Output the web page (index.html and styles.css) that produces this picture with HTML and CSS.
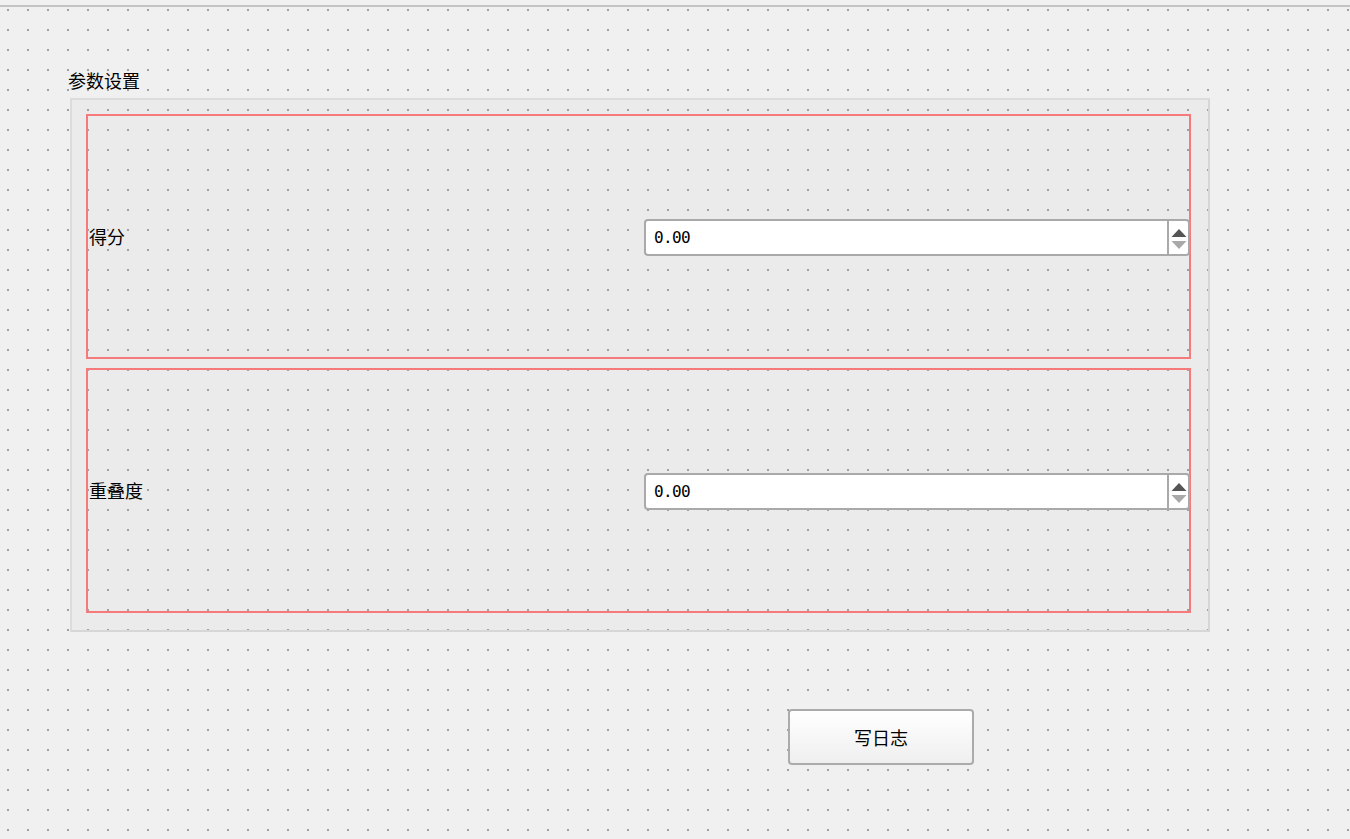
FILE: index.html
```html
<!DOCTYPE html>
<html lang="zh">
<head>
<meta charset="utf-8">
<title>参数设置</title>
<link rel="stylesheet" href="styles.css">
</head>
<body>
<div class="topline"></div>
<main class="form">
  <div class="group-title">参数设置</div>
  <section class="groupbox">
    <div class="row">
      <label class="label">得分</label>
      <div class="spinbox">
        <span class="value">0.00</span>
        <div class="arrows">
          <svg width="16" height="22" viewBox="0 0 16 22"><polygon points="8,2 15.5,10 0.5,10" fill="#555"/><polygon points="0.5,14 15.5,14 8,22" fill="#a9a9a9"/></svg>
        </div>
      </div>
    </div>
    <div class="row">
      <label class="label">重叠度</label>
      <div class="spinbox">
        <span class="value">0.00</span>
        <div class="arrows">
          <svg width="16" height="22" viewBox="0 0 16 22"><polygon points="8,2 15.5,10 0.5,10" fill="#555"/><polygon points="0.5,14 15.5,14 8,22" fill="#a9a9a9"/></svg>
        </div>
      </div>
    </div>
  </section>
  <div class="actions">
    <button class="btn">写日志</button>
  </div>
</main>
</body>
</html>
```
FILE: styles.css
```css
html, body {
  margin: 0;
  padding: 0;
}
body {
  width: 1350px;
  height: 839px;
  overflow: hidden;
  background-color: #f0f0f0;
  background-image: url("data:image/svg+xml,%3Csvg xmlns='http://www.w3.org/2000/svg' width='20' height='20'%3E%3Crect width='2' height='2' fill='%23a0a0a0'/%3E%3C/svg%3E");
  background-position: 7px 9px;
  background-repeat: repeat;
  font-family: "Noto Sans CJK SC", "Liberation Sans", sans-serif;
  font-size: 18px;
  color: #000;
}
.topline {
  height: 5px;
  border-bottom: 2px solid #c4c4c4;
  background: #f0f0f0;
}
.form {
  display: flex;
  flex-direction: column;
  padding-top: 63px;
}
.group-title {
  margin-left: 68px;
  line-height: 20px;
  height: 20px;
  margin-bottom: 8px;
}
.groupbox {
  margin-left: 70px;
  width: 1105px;
  border: 2px solid #dcdcdc;
  border-right-color: #d6d6d6;
  border-bottom-color: #d6d6d6;
  background-color: #ebebeb;
  background-image: url("data:image/svg+xml,%3Csvg xmlns='http://www.w3.org/2000/svg' width='20' height='20'%3E%3Crect width='2' height='2' fill='%23a0a0a0'/%3E%3C/svg%3E");
  background-position: 7px 9px;
  background-repeat: repeat;
  background-attachment: fixed;
  padding: 14px 17px 17px 14px;
  display: flex;
  flex-direction: column;
  gap: 9px;
}
.row {
  height: 239px;
  border: 2px solid #f67a7a;
  display: flex;
  align-items: center;
  justify-content: space-between;
  padding-left: 1px;
  padding-top: 2px;
}
.label {
  line-height: 20px;
  margin-bottom: 3px;
}
.spinbox {
  width: 542px;
  height: 33px;
  border: 2px solid #a9a9a9;
  border-radius: 4px;
  background: #fff;
  display: flex;
  align-items: center;
  justify-content: space-between;
  margin-right: -1px;
}
.value {
  font-family: "DejaVu Sans Mono", "Liberation Mono", monospace;
  font-size: 16px;
  letter-spacing: -0.6px;
  padding-left: 8px;
  color: #000;
}
.arrows {
  width: 18px;
  height: 33px;
  border-left: 2px solid #a9a9a9;
  display: flex;
  align-items: center;
  justify-content: center;
  padding-left: 1px;
}
.actions {
  display: flex;
  padding-left: 788px;
  margin-top: 77px;
}
.btn {
  width: 186px;
  height: 56px;
  border: 2px solid #ababab;
  border-radius: 4px;
  background: linear-gradient(#ffffff, #efefef);
  font-family: "Noto Sans CJK SC", "Liberation Sans", sans-serif;
  font-size: 18px;
  color: #000;
  padding: 0;
}
```
